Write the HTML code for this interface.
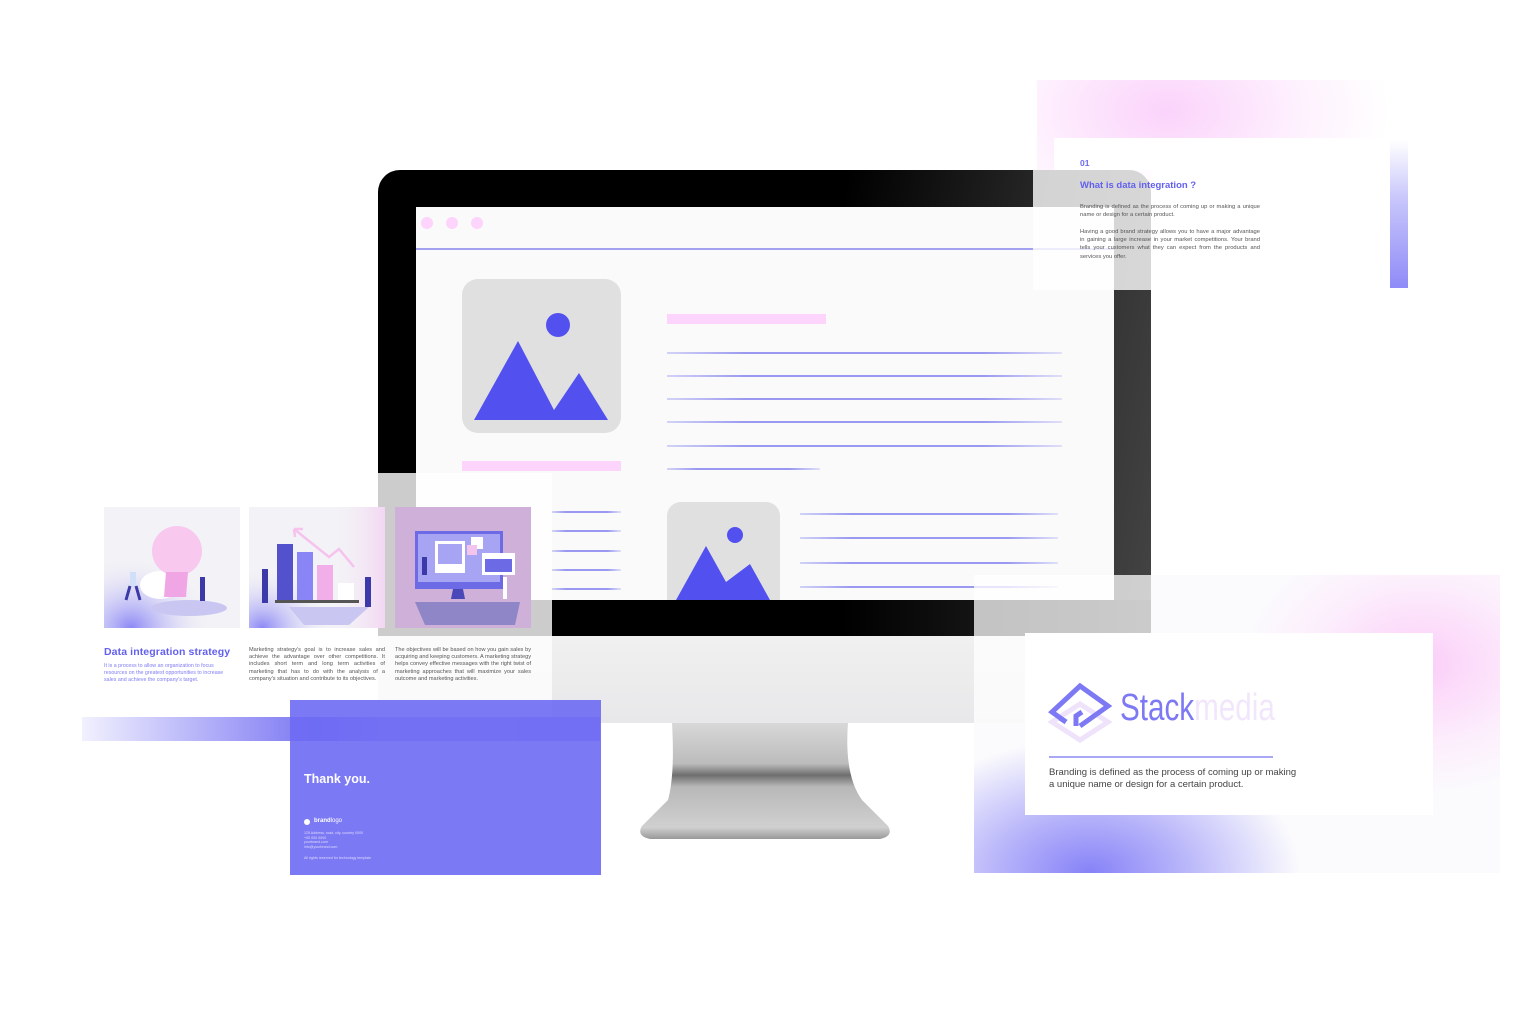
<!DOCTYPE html>
<html><head><meta charset="utf-8"><style>
*{margin:0;padding:0;box-sizing:border-box}
body{width:1536px;height:1024px;background:#fff;position:relative;overflow:hidden;font-family:"Liberation Sans",sans-serif}
.a{position:absolute}
.ln{position:absolute;height:2px;background:linear-gradient(90deg,rgba(120,120,240,.3),#9a98f0 20%,#9a98f0 80%,rgba(120,120,240,.2))}
.p{font-size:5.6px;line-height:7.2px;color:#555;text-align:justify}
</style></head><body>

<!-- top right card gradient -->
<div class="a" style="left:1037px;top:80px;width:371px;height:208px;background:radial-gradient(ellipse 60% 70% at 35% 15%,#fbd3fb,rgba(252,220,252,.4) 60%,rgba(255,255,255,0) 100%)"></div>
<div class="a" style="left:1390px;top:140px;width:18px;height:148px;background:linear-gradient(180deg,#fff,#c8c6fb 40%,#8f8bf8)"></div>

<!-- bottom right gradient -->
<div class="a" style="left:974px;top:575px;width:526px;height:298px;background:radial-gradient(ellipse 35% 45% at 85% 30%,#fbcdf8,rgba(253,225,252,.5) 60%,rgba(255,255,255,0)),radial-gradient(ellipse 40% 45% at 22% 100%,#8682f8,rgba(140,135,248,.6) 45%,rgba(255,255,255,0) 100%),#fbfbfd"></div>

<!-- monitor -->
<div class="a" style="left:378px;top:170px;width:773px;height:466px;border-radius:22px 22px 0 0;background:linear-gradient(100deg,#000 55%,#2a2a2a 80%,#444)"></div>
<div class="a" style="left:378px;top:600px;width:773px;height:36px;background:linear-gradient(90deg,#000 60%,#222 90%,#333)"></div>
<div class="a" style="left:378px;top:636px;width:773px;height:87px;background:linear-gradient(180deg,#f0f0f0,#e8e8ea)"></div>
<svg class="a" style="left:630px;top:720px" width="270" height="125" viewBox="0 0 270 125">
<defs><linearGradient id="st" x1="0" y1="0" x2="0" y2="1"><stop offset="0" stop-color="#d8d8d8"/><stop offset=".35" stop-color="#bcbcbc"/><stop offset=".45" stop-color="#6e6e6e"/><stop offset=".55" stop-color="#b8b8b8"/><stop offset=".9" stop-color="#d0d0d0"/><stop offset="1" stop-color="#999"/></linearGradient></defs>
<path d="M42 3 H218 Q214 55 232 80 L258 106 Q264 116 250 119 H20 Q6 116 12 106 L38 80 Q45 55 42 3Z" fill="url(#st)"/>
</svg>

<!-- screen -->
<div class="a" style="left:416px;top:207px;width:698px;height:393px;background:#fafafa"></div>
<div class="a" style="left:421px;top:217px;width:12px;height:12px;border-radius:50%;background:#fdd4fb"></div>
<div class="a" style="left:446px;top:217px;width:12px;height:12px;border-radius:50%;background:#fdd4fb"></div>
<div class="a" style="left:471px;top:217px;width:12px;height:12px;border-radius:50%;background:#fdd4fb"></div>
<div class="a" style="left:416px;top:248px;width:698px;height:2px;background:#a4a2f0"></div>
<svg class="a" style="left:462px;top:279px" width="159" height="154"><rect width="159" height="154" rx="16" fill="#e0e0e0"/><circle cx="96" cy="46" r="12" fill="#5350f0"/><path d="M12 141 L56 62 L92 131 L117 94 L146 141Z" fill="#5350f0"/></svg>
<div class="a" style="left:667px;top:314px;width:159px;height:10px;background:#fdd4fb"></div>
<div class="ln" style="left:667px;top:352px;width:395px"></div>
<div class="ln" style="left:667px;top:375px;width:395px"></div>
<div class="ln" style="left:667px;top:398px;width:395px"></div>
<div class="ln" style="left:667px;top:421px;width:395px"></div>
<div class="ln" style="left:667px;top:445px;width:395px"></div>
<div class="ln" style="left:667px;top:468px;width:153px"></div>
<div class="a" style="left:462px;top:461px;width:159px;height:10px;background:#fdd4fb"></div>
<div class="ln" style="left:552px;top:511px;width:69px"></div>
<div class="ln" style="left:552px;top:530px;width:69px"></div>
<div class="ln" style="left:552px;top:550px;width:69px"></div>
<div class="ln" style="left:552px;top:569px;width:69px"></div>
<div class="ln" style="left:552px;top:588px;width:69px"></div>
<svg class="a" style="left:667px;top:502px" width="113" height="98"><rect width="113" height="120" rx="14" fill="#e0e0e0"/><circle cx="68" cy="33" r="8" fill="#5350f0"/><path d="M9 98 L39 44 L59 80 L83 62 L103 98Z" fill="#5350f0"/></svg>
<div class="ln" style="left:800px;top:513px;width:258px"></div>
<div class="ln" style="left:800px;top:537px;width:258px"></div>
<div class="ln" style="left:800px;top:562px;width:258px"></div>
<div class="ln" style="left:800px;top:586px;width:258px"></div>

<!-- left slide overlay -->
<div class="a" style="left:378px;top:473px;width:174px;height:163px;background:rgba(255,255,255,.8)"></div>
<div class="a" style="left:378px;top:636px;width:174px;height:85px;background:rgba(255,255,255,.75)"></div>

<!-- illustration 1 -->
<svg class="a" style="left:104px;top:507px" width="136" height="121" viewBox="0 0 136 121">
<defs><radialGradient id="g1" cx=".2" cy="1" r=".6"><stop offset="0" stop-color="#8c88f6"/><stop offset="1" stop-color="#f3f2f7" stop-opacity="0"/></radialGradient></defs>
<rect width="136" height="121" fill="#f3f2f6"/><rect width="136" height="121" fill="url(#g1)"/>
<ellipse cx="85" cy="101" rx="38" ry="8" fill="#c9c6f2"/>
<ellipse cx="56" cy="78" rx="20" ry="14" fill="#fff"/>
<circle cx="73" cy="44" r="25" fill="#f8c8ef"/>
<path d="M62 65 L84 65 L82 90 L60 90Z" fill="#f0a6e4"/>
<rect x="26" y="65" width="6" height="14" fill="#cfe0f8"/><path d="M26 79 L22 93 M32 79 L36 93" stroke="#3b3aa8" stroke-width="3"/>
<rect x="96" y="70" width="5" height="24" fill="#3b3aa8"/>
</svg>
<!-- illustration 2 -->
<svg class="a" style="left:249px;top:507px" width="136" height="121" viewBox="0 0 136 121">
<defs><radialGradient id="g2" cx=".1" cy="1" r=".5"><stop offset="0" stop-color="#8c88f6"/><stop offset="1" stop-color="#f3f2f7" stop-opacity="0"/></radialGradient><linearGradient id="g2b" x1="0" x2="1"><stop offset=".6" stop-color="#f3f2f6" stop-opacity="0"/><stop offset="1" stop-color="#f3d6f3"/></linearGradient></defs>
<rect width="136" height="121" fill="#f3f2f6"/><rect width="136" height="121" fill="url(#g2)"/><rect width="136" height="121" fill="url(#g2b)"/>
<path d="M45 22 L80 50 L90 42 L105 60 M45 22 L46 30 M45 22 L54 22" stroke="#f5c3ed" stroke-width="2.5" fill="none"/>
<rect x="28" y="37" width="16" height="56" fill="#5451cc"/><rect x="48" y="45" width="16" height="48" fill="#8985f7"/><rect x="68" y="58" width="16" height="35" fill="#f2aee9"/><rect x="89" y="76" width="16" height="17" fill="#fff"/>
<rect x="26" y="93" width="84" height="3" fill="#555"/>
<path d="M40 100 L120 100 L100 118 L55 118Z" fill="#c9c6f2"/>
<rect x="13" y="62" width="6" height="34" fill="#3b3aa8"/><rect x="116" y="70" width="6" height="30" fill="#3b3aa8"/>
</svg>
<!-- illustration 3 -->
<svg class="a" style="left:395px;top:507px" width="136" height="121" viewBox="0 0 136 121">
<rect width="136" height="121" fill="#cfb0d8"/>
<path d="M20 95 L125 95 L120 118 L30 118Z" fill="#8f86c8"/>
<rect x="20" y="24" width="88" height="58" fill="#6d6ae6"/><rect x="23" y="27" width="82" height="48" fill="#a7a5f3"/>
<rect x="40" y="34" width="30" height="32" fill="#fff"/><rect x="43" y="37" width="24" height="20" fill="#a7a5f3"/>
<rect x="76" y="30" width="12" height="12" fill="#fff"/><rect x="72" y="38" width="10" height="10" fill="#f3c4ec"/>
<rect x="87" y="46" width="33" height="22" fill="#fff"/><rect x="90" y="52" width="27" height="13" fill="#6d6ae6"/>
<path d="M58 82 L68 82 L70 92 L56 92Z" fill="#4a47b8"/>
<rect x="27" y="50" width="5" height="18" fill="#3b3aa8"/><rect x="108" y="70" width="4" height="22" fill="#fff"/>
</svg>

<div class="a" style="left:104px;top:646px;font-size:10.5px;font-weight:bold;color:#6360ee;letter-spacing:.1px">Data integration strategy</div>
<div class="a" style="left:104px;top:663px;width:130px;font-size:5.3px;line-height:6.8px;color:#7f7cf2">It is a process to allow an organization to focus resources on the greatest opportunities to increase sales and achieve the company's target.</div>
<div class="a p" style="left:249px;top:647px;width:136px">Marketing strategy's goal is to increase sales and achieve the advantage over other competitions. It includes short term and long term activities of marketing that has to do with the analysis of a company's situation and contribute to its objectives.</div>
<div class="a p" style="left:395px;top:647px;width:136px">The objectives will be based on how you gain sales by acquiring and keeping customers. A marketing strategy helps convey effective messages with the right twist of marketing approaches that will maximize your sales outcome and marketing activities.</div>

<!-- gradient bar -->
<div class="a" style="left:82px;top:717px;width:518px;height:24px;background:linear-gradient(90deg,rgba(210,208,252,.3),#b0adf8 25%,#7c78f3 45%,#aaa7f6 60%,#9a97f6)"></div>
<!-- thank you -->
<div class="a" style="left:290px;top:700px;width:311px;height:175px;background:rgba(110,106,244,.9)"></div>
<div class="a" style="left:304px;top:772px;font-size:12.5px;font-weight:bold;color:#fff">Thank you.</div>
<div class="a" style="left:304px;top:819px;width:6px;height:6px;border-radius:50%;background:#fff"></div>
<div class="a" style="left:314px;top:818px;font-size:6px;color:#fff"><b>brand</b>logo</div>
<div class="a" style="left:304px;top:831px;font-size:3.6px;line-height:4.6px;color:#dedcfd">125 Address, road, city, country 0000<br>+00 000 0000<br>yourbrand.com<br>info@yourbrand.com</div>
<div class="a" style="left:304px;top:856px;font-size:3.6px;color:#dedcfd">All rights reserved for technology template</div>

<!-- top right card -->
<div class="a" style="left:1151px;top:138px;width:239px;height:152px;background:#fff"></div>
<div class="a" style="left:1054px;top:138px;width:97px;height:32px;background:#fff"></div>
<div class="a" style="left:1033px;top:170px;width:118px;height:120px;background:rgba(255,255,255,.8)"></div>
<div class="a" style="left:1080px;top:158px;font-size:8.5px;font-weight:bold;color:#6d6af0">01</div>
<div class="a" style="left:1080px;top:180px;font-size:9.5px;font-weight:bold;color:#6360ee">What is data integration ?</div>
<div class="a" style="left:1080px;top:203px;width:180px;font-size:5.8px;line-height:8.2px;color:#555;text-align:justify;text-align-last:left">Branding is defined as the process of coming up or making a unique name or design for a certain product.</div>
<div class="a" style="left:1080px;top:228px;width:180px;font-size:5.8px;line-height:8.2px;color:#555;text-align:justify">Having a good brand strategy allows you to have a major advantage in gaining a large increase in your market competitions. Your brand tells your customers what they can expect from the products and services you offer.</div>

<!-- bottom right card -->
<div class="a" style="left:974px;top:575px;width:177px;height:148px;background:rgba(255,255,255,.75)"></div>
<div class="a" style="left:1025px;top:633px;width:408px;height:182px;background:#fff"></div>
<svg class="a" style="left:1046px;top:682px" width="68" height="64" viewBox="0 0 68 64">
<path d="M34 22 L62 40 L34 58 L6 40Z" fill="none" stroke="#efe3fb" stroke-width="5"/>
<path d="M30 44 L30 34 L36 30 M20 40 L6 30 L34 4 L62 24 L34 44" fill="none" stroke="#7d79f5" stroke-width="5" stroke-linejoin="miter"/>
<path d="M20 40 L14 36" stroke="#7d79f5" stroke-width="5"/>
</svg>
<div class="a" style="left:1120px;top:686px;font-size:38px;line-height:44px;color:#7d79f5;font-family:'Liberation Sans Narrow','Liberation Sans',sans-serif;transform:scaleX(.78);transform-origin:left">Stack<span style="color:#f2e6fc">media</span></div>
<div class="a" style="left:1049px;top:756px;width:224px;height:1.5px;background:#aaa7f7"></div>
<div class="a" style="left:1049px;top:767px;font-size:9.5px;line-height:12px;color:#444">Branding is defined as the process of coming up or making<br>a unique name or design for a certain product.</div>

</body></html>
